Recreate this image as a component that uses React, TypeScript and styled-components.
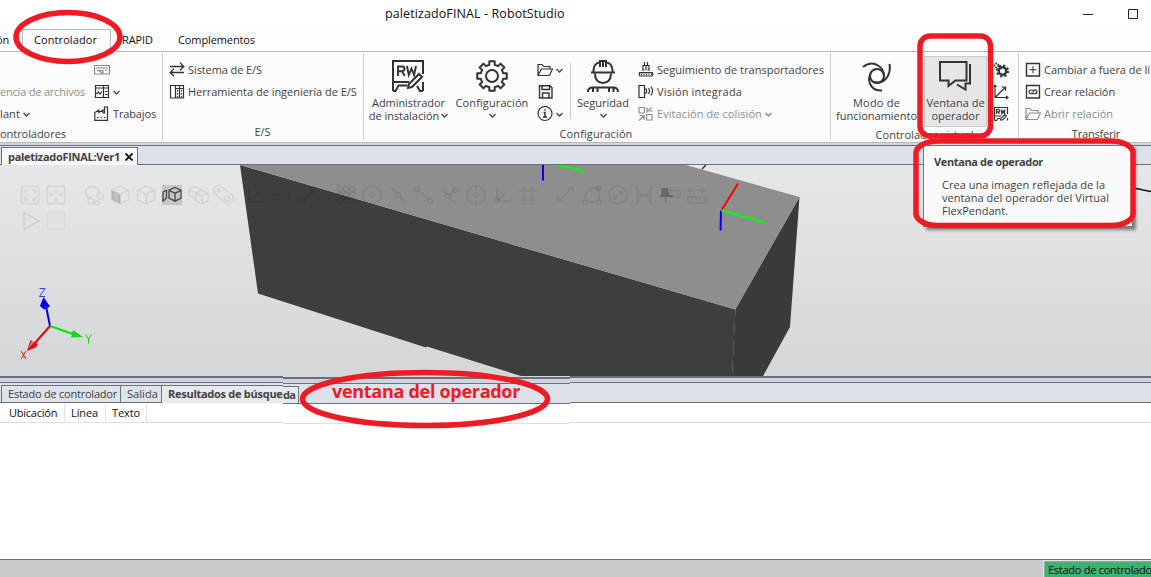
import React from "react";
import styled, { createGlobalStyle, css } from "styled-components";

const GlobalStyle = createGlobalStyle`
  * { box-sizing: border-box; }
  body { margin: 0; overflow: hidden; background: #fff; font-family: "Open Sans", "Noto Sans", sans-serif; font-size: 11px; }
  svg { display: block; flex: none; }
`;

const INK = "#333333";
const LINE = "#6d727a";
const STRIP = "#dce1ea";
const RED = "#ed1c24";

const Window = styled.div`
  position: relative;
  display: flex;
  flex-direction: column;
  width: 1151px;
  height: 577px;
  overflow: hidden;
  background: #fff;
`;

const Text = styled.span<{ $ls?: number; $muted?: boolean; $bold?: boolean; $black?: boolean }>`
  white-space: nowrap;
  letter-spacing: ${(p) => p.$ls ?? 0}px;
  font-weight: ${(p) => (p.$bold ? 700 : 400)};
  color: ${(p) => (p.$black ? "#111" : p.$muted ? "#8e8e8e" : "#424242")};
`;

/* Title bar and ribbon tabs */
const TitleBar = styled.header`
  display: flex;
  align-items: center;
  height: 27px;
  padding: 0 13px 0 385px;
  font-size: 12.5px;
`;
const WindowButtons = styled.div`
  display: flex;
  margin-left: auto;
`;
const MenuTabs = styled.nav`
  display: flex;
  height: 24px;
  line-height: 25px;
  background: #fdfdfd;
`;
const MenuTab = styled.div<{ $w: number; $active?: boolean; $pad?: number; $shift?: number }>`
  flex: none;
  width: ${(p) => p.$w}px;
  margin-left: ${(p) => p.$shift ?? 0}px;
  padding-left: ${(p) => p.$pad ?? 0}px;
  ${(p) =>
    p.$active &&
    css`
      position: relative;
      height: 23px;
      margin-top: 2px;
      padding-left: 11px;
      line-height: 20px;
      border: 1px solid #bababa;
      border-bottom: 0;
      background: #fcfcfc;
    `}
`;

/* Ribbon */
const Ribbon = styled.section`
  display: flex;
  height: 92px;
  border-top: 1px solid #bababa;
  border-bottom: 1px solid #b9babc;
  background: #fcfcfc;
`;
const Group = styled.div<{ $w: number }>`
  display: flex;
  flex-direction: column;
  flex: none;
  width: ${(p) => p.$w}px;
  margin: 1px 0 2px;
  padding-top: 6px;
  border-right: 1px solid #cdcfd8;
`;
const GroupBody = styled.div<{ $pad?: number }>`
  display: flex;
  height: 67px;
  padding-left: ${(p) => p.$pad ?? 0}px;
`;
const Caption = styled.div<{ $left?: boolean; $shift?: number }>`
  line-height: 17px;
  text-align: ${(p) => (p.$left ? "left" : "center")};
  padding-right: ${(p) => p.$shift ?? 0}px;
`;
const Stack = styled.div<{ $w?: number; $ml?: number }>`
  display: flex;
  flex-direction: column;
  flex: none;
  width: ${(p) => (p.$w ? p.$w + "px" : "auto")};
  margin-left: ${(p) => p.$ml ?? 0}px;
`;
const Row = styled.div`
  display: flex;
  align-items: center;
  gap: 3px;
  height: 22px;
  ${Text} {
    padding-bottom: 2px;
  }
`;
const BigButton = styled.div<{ $w: number; $ml?: number; $active?: boolean }>`
  display: flex;
  flex-direction: column;
  align-items: center;
  flex: none;
  width: ${(p) => p.$w}px;
  margin-left: ${(p) => p.$ml ?? 0}px;
  padding-top: 1px;
  line-height: 13px;
  ${(p) =>
    p.$active &&
    css`
      height: 71px;
      margin-top: -3px;
      padding-top: 3px;
      border: 1px solid #cccccc;
      background: #e6e6e6;
    `}
`;
const BigIcon = styled.div<{ $nudge?: number }>`
  height: 32px;
  margin-bottom: 4px;
  padding-right: ${(p) => p.$nudge ?? 0}px;
`;
const BigLine = styled.div`
  display: flex;
  align-items: center;
  justify-content: center;
  gap: 2px;
  height: 13px;
`;
const Divider = styled.div`
  width: 1px;
  height: 56px;
  margin: 4px 1px 0 2px;
  background: #c8cad4;
`;

/* Document tab strip */
const Gap = styled.div`
  height: 2px;
  background: #d1d5df;
`;
const DocStrip = styled.div`
  display: flex;
  height: 20px;
  padding: 1px 0 0 1px;
  border-top: 1px solid ${LINE};
  border-bottom: 1px solid ${LINE};
  background: ${STRIP};
`;
const DocTab = styled.div`
  display: flex;
  align-items: center;
  gap: 5px;
  width: 137px;
  height: 18px;
  padding-left: 6px;
  border: 1px solid ${LINE};
  border-bottom: 0;
  background: #f7f9fb;
`;

/* Bottom panel */
const Splitter = styled.div`
  height: 6px;
  border-top: 2px solid #6a6f77;
  background: #cfd4de;
`;
const PanelTabs = styled.div`
  display: flex;
  align-items: flex-end;
  height: 21px;
  padding-left: 1px;
  border-top: 1px solid ${LINE};
  border-bottom: 1px solid ${LINE};
  background: ${STRIP};
`;
const PanelTab = styled.div<{ $w: number; $pad: number; $active?: boolean }>`
  flex: none;
  width: ${(p) => p.$w}px;
  height: ${(p) => (p.$active ? 18 : 17)}px;
  margin-bottom: ${(p) => (p.$active ? -1 : 0)}px;
  padding-left: ${(p) => p.$pad}px;
  line-height: 15px;
  border: 1px solid ${LINE};
  border-right-width: ${(p) => (p.$active ? 1 : 0)}px;
  border-bottom: 0;
  background: ${(p) => (p.$active ? "#e6e9ee" : "#dfe3ea")};
`;
const TableHead = styled.div`
  display: flex;
  height: 20px;
  padding-left: 1px;
  line-height: 20px;
  border-bottom: 1px solid #dfdfdf;
`;
const HeadCell = styled.div<{ $w: number; $pad: number }>`
  width: ${(p) => p.$w}px;
  padding-left: ${(p) => p.$pad}px;
  border-right: 1px solid #e3e3e3;
`;
const TableBody = styled.div`
  flex: 1;
`;
const StatusBar = styled.footer`
  display: flex;
  justify-content: flex-end;
  height: 18px;
  padding-top: 1px;
  border-top: 1px solid #6d7078;
  background: #c9cacc;
`;
const StatusCell = styled.div`
  width: 107px;
  padding-left: 3px;
  line-height: 16px;
  white-space: nowrap;
  border: 1px solid #8fa99a;
  border-width: 1px 0 0 1px;
  outline: 1px solid #e2e2e2;
  background: #3cb371;
`;

/* Strip of the lower panel that sits one pixel lower than its surroundings */
const PanelPatch = styled.div`
  position: absolute;
  left: 283px;
  top: 376px;
  width: 287px;
  height: 48px;
  overflow: hidden;
  border-top: 1px solid #d6d7d8;
  background: #fff;
`;
const PatchTab = styled.div`
  width: 16px;
  height: 17px;
  line-height: 16px;
  border: 1px solid ${LINE};
  border-width: 1px 1px 0 0;
  background: #e6e9ee;
`;
const PatchTabs = styled(PanelTabs)`
  padding-left: 0;
`;

/* Tooltip */
const Tooltip = styled.div`
  position: absolute;
  left: 923px;
  top: 145px;
  width: 210px;
  height: 82px;
  padding: 9px 0 0 10px;
  line-height: 14px;
  border: 1px solid #767676;
  background: #fbfbfb;
  box-shadow: 3px 3px 3px rgba(0, 0, 0, 0.45);
`;
const TooltipBody = styled.div`
  display: flex;
  flex-direction: column;
  padding: 9px 0 0 8px;
  line-height: 13px;
`;
const Marks = styled.svg`
  position: absolute;
  left: 0;
  top: 0;
`;
const Note = styled.div`
  position: absolute;
  left: 332px;
  top: 380px;
  font-size: 18px;
  font-weight: 700;
  line-height: 22px;
  letter-spacing: -0.29px;
  white-space: nowrap;
  color: ${RED};
`;

type IconProps = { children: React.ReactNode; s?: number; c?: string; sw?: number };
const Icon = ({ children, s = 16, c = INK, sw = 1.2 }: IconProps) => (
  <svg width={s} height={s} viewBox={`0 0 ${s} ${s}`} fill="none" stroke={c} strokeWidth={sw}>
    {children}
  </svg>
);
const Chevron = ({ c = "#4c4c4c" }: { c?: string }) => (
  <svg width="7" height="7" viewBox="0 0 7 7" fill="none" stroke={c} strokeWidth="1.5">
    <path d="M0.5 2l3 3 3-3" />
  </svg>
);

const RwBoard = () => (
  <Icon s={32} sw={2}>
    <path d="M1 31V1h30v13M1 22h16M31 22v9M1 31h2.500l3-5.500h9" />
    <path d="M6 16V6.500h4q2.500 0 2.500 2.300t-2.500 2.400H6m4 0l2.800 4.800M15 6l1.800 9 2.700-6.500 2.600 6.500L24 6" strokeWidth="1.900" />
    <path d="M16 28l1-4L27 14l3 3L20 27zM25 26l3 5h3" fill="#fcfcfc" />
  </Icon>
);
const gearPath = (() => {
  const pts: string[] = [];
  const teeth = 8;
  for (let i = 0; i < teeth; i++) {
    const a = (i * 2 * Math.PI) / teeth - Math.PI / 2;
    [[-0.23, 11.6], [-0.18, 15], [0.18, 15], [0.23, 11.6]].forEach(([d, r]) =>
      pts.push(`${(16 + r * Math.cos(a + d)).toFixed(2)} ${(16 + r * Math.sin(a + d)).toFixed(2)}`)
    );
  }
  return `M${pts.join("L")}Z`;
})();
const Gear = () => (
  <Icon s={32} sw={2}>
    <path d={gearPath} strokeLinejoin="round" />
    <circle cx="16" cy="16" r="6" />
  </Icon>
);
const Worker = () => (
  <Icon s={32} sw={2}>
    <path d="M4 12.500h24M6.500 12V10Q7 3 13 2.500M25.500 12V10Q25 3 19 2.500M13 7V1h6v6M16 2v5" />
    <path d="M8 13.500q0 9 8 9.500 8-.5 8-9.500M1 32q0-4.500 4.500-4.500h21Q31 27.500 31 32M6 28v4M10.500 28v4M22 28v4M26.500 28v4" />
  </Icon>
);
const Swirl = () => (
  <Icon s={32} sw={2}>
    <circle cx="16" cy="16" r="7" />
    <path d="M2 7Q10 1 17 5.500Q23 9 23 16M28.500 4Q30 13 25 18.500Q20 24 13 22M9.500 14Q6 21 11 27Q15 31 21 30.500" />
  </Icon>
);
const Bubbles = () => (
  <Icon s={32} sw={2}>
    <path d="M1 2h26.500v18.500H16.500L9.500 26v-5.500H1z" />
    <path d="M31 4v19.500h-4.500v6L18 24.500" />
  </Icon>
);
const Folder = ({ c }: { c?: string }) => (
  <Icon c={c}>
    <path d="M1 13.500v-11h4l1.500 2H13V7M1 13.500h11.500L15.500 7H4.500z" />
  </Icon>
);

const Scene = () => (
  <svg width="1151" height="211" viewBox="0 165 1151 211" fill="none">
    <defs>
      <linearGradient id="bg" x1="0" y1="0" x2="0" y2="1">
        <stop offset="0" stopColor="#e6e7e9" />
        <stop offset="1" stopColor="#d5d6d7" />
      </linearGradient>
    </defs>
    <rect x="0" y="165" width="1151" height="211" fill="url(#bg)" />
    <path d="M240 165L735.500 309.500 732 376H521L427 346.500l-1 1-168-54z" fill="#3e3e3e" />
    <path d="M735.500 309L799.500 197 790 327 763 376H732z" fill="#3a3a3a" />
    <path d="M240 165H686L799.500 197 735.500 309.500z" fill="#8e8e8e" />
    <path d="M702 169l4-4" stroke="#702020" strokeWidth="1.500" />
    <path d="M543 165v15.500" stroke="#0000ff" strokeWidth="2" />
    <path d="M557 164.500l27 7" stroke="#00ff00" strokeWidth="2" />
    <path d="M722 209.500l16-26" stroke="#ff0000" strokeWidth="2" />
    <path d="M721 210.500l-.5 20" stroke="#0000ff" strokeWidth="2" />
    <path d="M721.500 210.500l43 11.500" stroke="#00ff00" strokeWidth="2" />
    <path d="M1135 188.500l4 .5 4 1 8 1.500" stroke="#111" strokeWidth="1.300" />

    <g stroke="#000" strokeOpacity="0.075" strokeWidth="1.500">
      <path d="M21.500 186.500h17v17h-17zM25 193v-3h3M32 190h3v3M35 197v3h-3M28 200h-3v-3M47.500 186.500h17v17h-17z" />
      <path d="M56 189v4M56 197v4M50 195h4M58 195h4M54.500 190.500l1.500-1.500 1.500 1.500M54.500 199.500l1.500 1.500 1.500-1.500M51.500 193.500L50 195l1.500 1.500M60.500 193.500L62 195l-1.500 1.500" />
      <path d="M88 198q-5-6 0-10 5-3 9 0 3 3 1 5M91 198l-3-1" />
      <circle cx="91" cy="201" r="3" /><circle cx="100.500" cy="196" r="3" /><circle cx="97" cy="203" r="2" />
      <path d="M120 186l8.500 4v10l-8.500 4-8.500-4v-10zM128.500 190l-8.500 4-8.500-4M120 194v10M146 186l8.500 4v10l-8.500 4-8.500-4v-10zM154.500 190l-8.500 4-8.500-4M146 194v10" />
      <path d="M112 191l8 4v8l-8-4z" fill="#000" fillOpacity="0.16" />
      <path d="M196 192V199l-7-3.500v-6l6-3 6 3M189 189.500l6 3M202 190l6 3v8l-6 3-6-3v-8zM196 193l6 3 6-3M202 196v8" />
      <path d="M216 194l9 9q4 2 7-1t0-7l-10-8q-4-3-7 0t1 7z" />
      <circle cx="219" cy="190.500" r="1.500" /><circle cx="227.500" cy="198.500" r="2.500" />
      <path d="M249 187v15h14M249 202l12-12M274 195h16M285 190l5 5-5 5M303 201l10-10" />
      <circle cx="302" cy="202" r="2.500" /><circle cx="313" cy="190" r="2.500" />
      <circle cx="476" cy="195" r="9" /><circle cx="476" cy="195" r="2" />
    </g>
    <g stroke="#000" strokeOpacity="0.085" strokeWidth="1.300">
      {[340, 346, 352].map((x) => [189, 195, 201].map((y) => <circle key={x + "-" + y} cx={x} cy={y} r="2.500" />))}
      <circle cx="372" cy="195" r="9" /><circle cx="372" cy="195" r="2" />
      <path d="M391 187l5 6M400 197l6 6M419 190l10 10M442 189l6 6M450 194l5-5M450 198l6 6" />
      <circle cx="398" cy="195" r="2.500" /><circle cx="417" cy="189" r="2.500" /><circle cx="430" cy="201" r="2.500" /><circle cx="448" cy="196" r="2.500" /><circle cx="455" cy="190" r="2.500" />
      <path d="M476 186v4M476 200v4M467 195h4M481 195h4M497 186v15h14M498 200l7-7M519 191h18M519 200h18M524 186v18M532 186v18" />
      <circle cx="497" cy="200" r="2.500" />
      <path d="M560 200l12-12M568 188h5v5M558 196v5h5" />
      <path d="M587 188h12v12M585 199q0-9 9-11M587 202h10" />
      <circle cx="585" cy="202" r="2" /><circle cx="599" cy="202" r="2" /><circle cx="599" cy="188" r="2" />
      <circle cx="618" cy="195" r="9" />
      <path d="M614 199l8-8M618 191h4v4M614 195v4h4M635 187h3v16h-3M653 187h-3v16h3M640 195h8M642 193l-2 2 2 2M646 193l2 2-2 2" />
      <path d="M668 190h12v7h-12zM672 190v3M676 190v3M688 197h17v6h-17zM692 197v3M696 197v3M700 197v3M688 190h17M691 187l-3 3 3 3M702 187l3 3-3 3" />
    </g>
    <path d="M661 188h7v4l2 3h3v2h-7v5h-1v-5h-5v-2h1.500z" fill="#000" fillOpacity="0.25" />
    <path d="M24 212.500v17l15-8.500z" stroke="#000" strokeOpacity="0.085" strokeWidth="1.500" />
    <path d="M47.500 212.500h17v17h-17z" stroke="#000" strokeOpacity="0.04" strokeWidth="1.500" />
    <rect x="162" y="185" width="20" height="20" fill="#c5c6c7" />
    <path d="M175 187.500l6 2.700v8l-6 3-6-3v-8zM169 190.500l6 2.700 6-2.700M175 193.200v8M163 192l3.500-1.500v7.500L163 201z" stroke="#454545" strokeWidth="1.300" />

    <g strokeWidth="2">
      <path d="M50 326L46 306" stroke="#0000f0" />
      <path d="M50 326l23 8" stroke="#00e600" />
      <path d="M50 326L35 343" stroke="#f00000" />
    </g>
    <path d="M43.500 297l-3.500 9 4 3.500 6-3z" fill="#0000e0" />
    <path d="M83 337l-10-7-2 7.500z" fill="#00e010" />
    <path d="M27 351l3.500-11 7.500 4-2 3.500z" fill="#d81818" />
    <path d="M28.500 348.500l3.500-8 2 1z" fill="#ff9090" />
    <g strokeWidth="1">
      <path d="M39.500 288.500h5.500l-5.500 8h5.500" stroke="#3a3ae0" />
      <path d="M85.500 334.500l3 4.500 3-4.500M88.500 339v4.500" stroke="#10d020" />
      <path d="M21 351l5 8M26 351l-5 8" stroke="#f01010" />
    </g>
  </svg>
);

export default function App() {
  return (
    <Window>
      <GlobalStyle />
      <TitleBar>
        <Text $ls={0.1} $black>paletizadoFINAL - RobotStudio</Text>
        <WindowButtons>
          <svg width="60" height="14" viewBox="0 0 60 14" fill="none" stroke="#222">
            <path d="M5 7.500h10M50.500 2.500h9v9h-9z" />
          </svg>
        </WindowButtons>
      </TitleBar>
      <MenuTabs>
        <MenuTab $w={26} $shift={-4}><Text $black>ón</Text></MenuTab>
        <MenuTab $w={89} $active><Text $ls={0.09} $black>Controlador</Text></MenuTab>
        <MenuTab $w={67} $pad={11}><Text $ls={-0.08} $black>RAPID</Text></MenuTab>
        <MenuTab $w={90}><Text $ls={-0.11} $black>Complementos</Text></MenuTab>
      </MenuTabs>

      <Ribbon>
        <Group $w={163}>
          <GroupBody>
            <Stack $w={94}>
              <Row />
              <Row><Text $ls={-0.2} $muted>encia de archivos</Text></Row>
              <Row><Text $ls={0.1}>lant</Text><Chevron /></Row>
            </Stack>
            <Stack>
              <Row>
                <Icon c="#8a8a8a"><path d="M.5 3.500h15v8.500H.5zM2 6h12M3 8.500h6v3M11 8.500h2M4 8l4 3" /></Icon>
              </Row>
              <Row>
                <Icon><path d="M1.500 1.500h13v12h-13zM9.500 2v11M1.500 4h13M11 7.500h2.500M11 10.500h2.500M2.500 10l2-2 1.500 2 2-2.500" /></Icon>
                <Chevron />
              </Row>
              <Row>
                <Icon><path d="M.8 14.300V6.500l4-2.500v2.500L9 4v3h1.500V1h3v13.300zM3 11.500h1.500M6.500 11.500H8M10 11.500h1.500" /></Icon>
                <Text $ls={-0.14}>Trabajos</Text>
              </Row>
            </Stack>
          </GroupBody>
          <Caption $left><Text $ls={-0.05}>ontroladores</Text></Caption>
        </Group>

        <Group $w={201}>
          <GroupBody $pad={6}>
            <Stack>
              <Row>
                <Icon sw={1.3}><path d="M1 4.500h14M11 .8l3.800 3.700L11 8.200M15 10.500H1M5 6.800l-3.800 3.700L5 14.200" /></Icon>
                <Text $ls={-0.09}>Sistema de E/S</Text>
              </Row>
              <Row>
                <Icon><path d="M1.500 1.500h13v12.500h-13zM6.500 1.500V14M10.500 1.500V14M6.500 4.500h8" /><path d="M8.500 6v8M12.500 6v8" strokeDasharray="1.500 1.500" /></Icon>
                <Text $ls={-0.02}>Herramienta de ingeniería de E/S</Text>
              </Row>
            </Stack>
          </GroupBody>
          <Caption $shift={1}><Text>E/S</Text></Caption>
        </Group>

        <Group $w={467}>
          <GroupBody $pad={2}>
            <BigButton $w={85}>
              <BigIcon $nudge={1}><RwBoard /></BigIcon>
              <BigLine><Text $ls={-0.06}>Administrador</Text></BigLine>
              <BigLine><Text $ls={-0.02}>de instalación</Text><Chevron /></BigLine>
            </BigButton>
            <BigButton $w={82}>
              <BigIcon><Gear /></BigIcon>
              <BigLine><Text $ls={0.11}>Configuración</Text></BigLine>
              <BigLine><Chevron /></BigLine>
            </BigButton>
            <Stack $ml={4} $w={31}>
              <Row><Folder /><Chevron /></Row>
              <Row><Icon sw={1.4}><path d="M2.500 1.700H13l2 2V14H2.500zM5 2v3.500h7.500V2M5.500 14V9H12v5" /></Icon></Row>
              <Row>
                <Icon><circle cx="8" cy="7.500" r="7" /><path d="M6.500 6.500H8V11M6 11h4M7.300 4h1.400" strokeWidth="1.500" /></Icon>
                <Chevron />
              </Row>
            </Stack>
            <Divider />
            <BigButton $w={62}>
              <BigIcon><Worker /></BigIcon>
              <BigLine><Text $ls={0.03}>Seguridad</Text></BigLine>
              <BigLine><Chevron /></BigLine>
            </BigButton>
            <Stack $ml={4}>
              <Row>
                <Icon><path d="M5 8V3.500h6V8M6.500 0v3M9.500 0v3M8 3.500V8M4 8h2.500M9.500 8H12M1 10.500h14M2 14h12q1.500-1.700 0-3.400H2q-1.500 1.700 0 3.400z" /><path d="M3 12.300h11" strokeDasharray="1 1.500" /></Icon>
                <Text $ls={0.02}>Seguimiento de transportadores</Text>
              </Row>
              <Row>
                <Icon><path d="M1 1.500h5.500v12H1zM7 5h1.500v4H7M10.500 4q2 3 0 6M13 2.500q3 4.500 0 9" /></Icon>
                <Text $ls={0.15}>Visión integrada</Text>
              </Row>
              <Row>
                <Icon c="#8e8e8e"><path d="M1 1.500h5.500V7H1zM8.500 8.500H14V14H8.500zM8.500 6.500l5-5M9 1.500V5M15 5h-3.500M1 14.500l5-5M1.500 9.500H6V14" /></Icon>
                <Text $ls={0.08} $muted>Evitación de colisión</Text><Chevron c="#8e8e8e" />
              </Row>
            </Stack>
          </GroupBody>
          <Caption $shift={2}><Text $ls={0.11}>Configuración</Text></Caption>
        </Group>

        <Group $w={188}>
          <GroupBody $pad={5}>
            <BigButton $w={81}>
              <BigIcon><Swirl /></BigIcon>
              <BigLine><Text $ls={0.2}>Modo de</Text></BigLine>
              <BigLine><Text>funcionamiento</Text></BigLine>
            </BigButton>
            <BigButton $w={63} $ml={7} $active>
              <BigIcon $nudge={1}><Bubbles /></BigIcon>
              <BigLine><Text>Ventana de</Text></BigLine>
              <BigLine><Text>operador</Text></BigLine>
            </BigButton>
            <Stack $ml={6}>
              <Row>
                <Icon><circle cx="9.500" cy="9" r="3.700" strokeWidth="2.400" /><circle cx="9.500" cy="9" r="5.600" strokeWidth="2" strokeDasharray="2.200 2.200" /><circle cx="3.500" cy="3.500" r="2" strokeDasharray="1.500 1" strokeWidth="1.800" /></Icon>
              </Row>
              <Row><Icon><path d="M2 1v12.500h13M2 13.500L12 3.500M8.500 3h4v4M.5 3L2 1l1.500 2M13 12l2 1.500-2 1.500" /></Icon></Row>
              <Row><Icon><path d="M1.500 14.500v-13h13V8M1.500 10H8M14.500 12v2.500M1.500 14.500h2l1.500-2h2M7.500 14l.5-2 4-3.500 1.500 1.500-4 4z" /><path d="M3.500 8V3.500h2q1 0 1 1.200t-1 1.200h-2m1.500 0L6.500 8M8 3.500l.8 4.200 1.200-3 1.200 3 .8-4.200" /></Icon></Row>
            </Stack>
          </GroupBody>
          <Caption><Text $ls={0.04}>Controlador virtual</Text></Caption>
        </Group>

        <Group $w={155}>
          <GroupBody $pad={6}>
            <Stack>
              <Row><Icon sw={1.4}><path d="M1.500 1.500h13v12.500h-13z" /><path d="M4.500 7.700h7M8 4.200v7" strokeWidth="1" /></Icon><Text $ls={-0.03}>Cambiar a fuera de lí</Text></Row>
              <Row><Icon sw={1.3}><path d="M1.500 1.500h13v12.500h-13z" /><path d="M7.500 9.500q-3.500.8-3.500-1.500T7 6q2 0 2 2.200M8.500 6.200Q12 5.200 12 7.500T9.300 9.800Q7 10 7 7.800" strokeWidth="1.100" /></Icon><Text $ls={-0.07}>Crear relación</Text></Row>
              <Row><Folder c="#8e8e8e" /><Text $ls={-0.02} $muted>Abrir relación</Text></Row>
            </Stack>
          </GroupBody>
          <Caption><Text $ls={-0.2}>Transferir</Text></Caption>
        </Group>
      </Ribbon>

      <Gap />
      <DocStrip>
        <DocTab>
          <Text $ls={-0.29} $bold>paletizadoFINAL:Ver1</Text>
          <svg width="8" height="8" viewBox="0 0 8 8" stroke="#000" strokeWidth="1.800"><path d="M.5.5l7 7M7.500.5l-7 7" /></svg>
        </DocTab>
      </DocStrip>
      <Scene />
      <Splitter />
      <PanelTabs>
        <PanelTab $w={119} $pad={6}><Text $ls={-0.23}>Estado de controlador</Text></PanelTab>
        <PanelTab $w={41} $pad={6}><Text $ls={0.05}>Salida</Text></PanelTab>
        <PanelTab $w={138} $pad={6} $active><Text $ls={-0.27} $bold>Resultados de búsque</Text></PanelTab>
      </PanelTabs>
      <TableHead>
        <HeadCell $w={64} $pad={8}><Text $ls={-0.24} $black>Ubicación</Text></HeadCell>
        <HeadCell $w={41} $pad={6}><Text $ls={-0.11} $black>Línea</Text></HeadCell>
        <HeadCell $w={41} $pad={6}><Text $ls={-0.11} $black>Texto</Text></HeadCell>
      </TableHead>
      <TableBody />
      <StatusBar>
        <StatusCell><Text $ls={-0.27} $black>Estado de controlado</Text></StatusCell>
      </StatusBar>

      <PanelPatch>
        <Splitter />
        <PatchTabs><PatchTab><Text $ls={-0.8} $bold>da</Text></PatchTab></PatchTabs>
        <TableHead />
      </PanelPatch>

      <Tooltip>
        <Text $ls={-0.37} $bold>Ventana de operador</Text>
        <TooltipBody>
          <Text $ls={0.02}>Crea una imagen reflejada de la</Text>
          <Text $ls={0.05}>ventana del operador del Virtual</Text>
          <Text $ls={-0.03}>FlexPendant.</Text>
        </TooltipBody>
      </Tooltip>

      <Marks width="1151" height="577" viewBox="0 0 1151 577" fill="none" stroke={RED} strokeWidth="5.500">
        <ellipse cx="68" cy="37" rx="52" ry="24.500" />
        <rect x="920" y="36" width="70.500" height="100" rx="10" />
        <rect x="916" y="141" width="217" height="84.500" rx="22" ry="12" />
        <ellipse cx="425" cy="399" rx="122.500" ry="26.500" />
      </Marks>
      <Note>ventana del operador</Note>
    </Window>
  );
}
